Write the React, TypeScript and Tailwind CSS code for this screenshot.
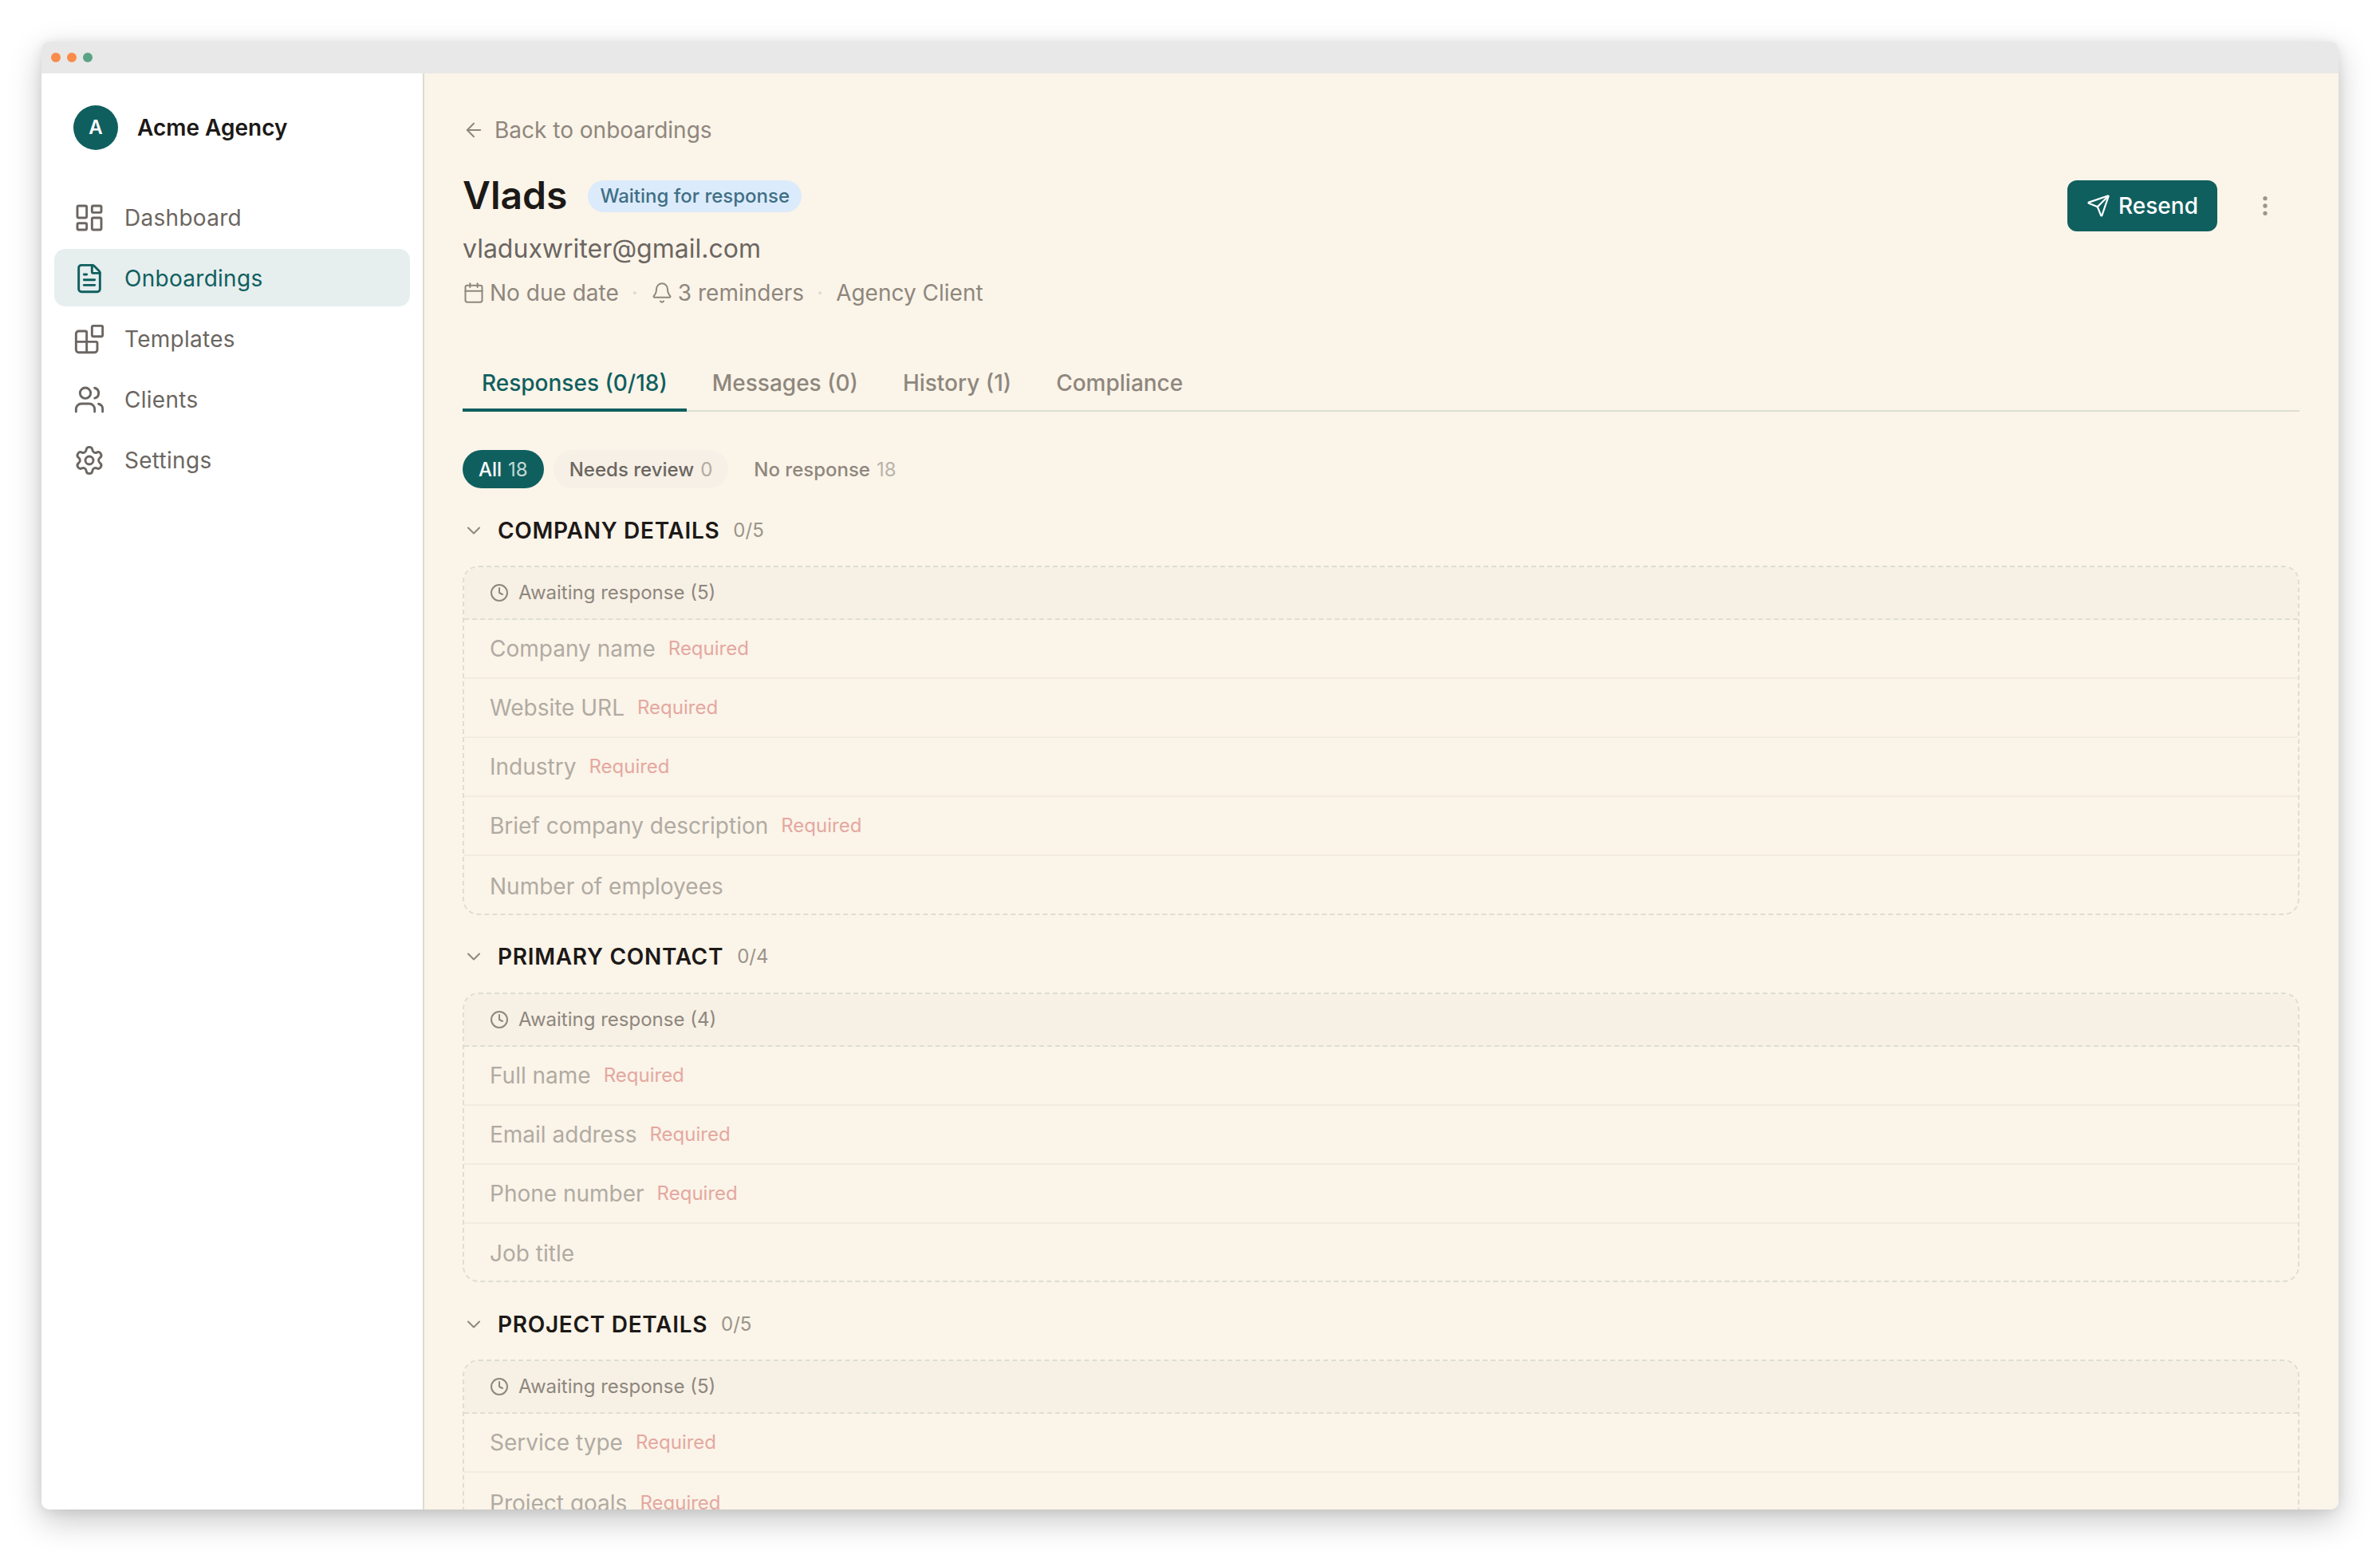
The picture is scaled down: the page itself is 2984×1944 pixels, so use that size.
import React from 'react';
import {
  ArrowLeft,
  Bell,
  Blocks,
  Calendar,
  ChevronDown,
  Clock,
  EllipsisVertical,
  FileText,
  LayoutDashboard,
  Send,
  Settings,
  Users,
} from 'lucide-react';

const navItems = [
  { label: 'Dashboard', icon: LayoutDashboard },
  { label: 'Onboardings', icon: FileText, active: true },
  { label: 'Templates', icon: Blocks },
  { label: 'Clients', icon: Users },
  { label: 'Settings', icon: Settings },
];

const tabs = [
  { label: 'Responses (0/18)', active: true },
  { label: 'Messages (0)' },
  { label: 'History (1)' },
  { label: 'Compliance' },
];

const sections = [
  {
    title: 'COMPANY DETAILS',
    count: '0/5',
    waiting: 5,
    rows: [
      { label: 'Company name', required: true },
      { label: 'Website URL', required: true },
      { label: 'Industry', required: true },
      { label: 'Brief company description', required: true },
      { label: 'Number of employees' },
    ],
  },
  {
    title: 'PRIMARY CONTACT',
    count: '0/4',
    waiting: 4,
    rows: [
      { label: 'Full name', required: true },
      { label: 'Email address', required: true },
      { label: 'Phone number', required: true },
      { label: 'Job title' },
    ],
  },
  {
    title: 'PROJECT DETAILS',
    count: '0/5',
    waiting: 5,
    rows: [
      { label: 'Service type', required: true },
      { label: 'Project goals', required: true },
    ],
  },
];

function Sidebar() {
  return (
    <aside className="w-[480px] shrink-0 border-r-2 border-[#dcdccf] bg-white px-4">
      <div className="mt-[40px] flex h-[56px] items-center pl-[24px]">
        <div className="flex h-[56px] w-[56px] items-center justify-center rounded-full bg-[#105f5f] text-[24px] font-semibold text-white">
          A
        </div>
        <span className="ml-[24px] text-[28px] font-semibold text-[#1c1917]">Acme Agency</span>
      </div>
      <nav className="mt-[48px] flex flex-col gap-1">
        {navItems.map((item) => (
          <div
            key={item.label}
            className={
              item.active
                ? 'flex h-[72px] items-center gap-[24px] rounded-[14px] bg-[#e6eeee] pl-[24px] pt-[2px] text-[#105f5f]'
                : 'flex h-[72px] items-center gap-[24px] rounded-[14px] pl-[24px] pt-[2px] text-[#6b6661]'
            }
          >
            <item.icon size={40} strokeWidth={1.75} />
            <span className="text-[28px] tracking-[0.01em]">{item.label}</span>
          </div>
        ))}
      </nav>
    </aside>
  );
}

function Section({ section }: { section: (typeof sections)[number] }) {
  return (
    <section className="mb-[32px]">
      <div className="flex h-[40px] items-center pt-[1px]">
        <ChevronDown size={28} strokeWidth={1.75} className="text-[#8e877d]" />
        <span className="ml-[16px] text-[28px] font-semibold tracking-[0.025em] text-[#1c1917]">{section.title}</span>
        <span className="ml-[17px] text-[24px] text-[#9a948a]">{section.count}</span>
      </div>
      <div className="mt-[25px] rounded-[20px] border-2 border-dashed border-[#dddfd0]">
        <div className="flex h-[66px] items-center gap-[12px] rounded-t-[20px] border-b-2 border-dashed border-[#dddfd0] bg-[#f7f0e5] pl-[32px] text-[24px] text-[#8e877d]">
          <Clock size={24} strokeWidth={2} />
          <span>Awaiting response ({section.waiting})</span>
        </div>
        {section.rows.map((row, index) => (
          <div
            key={row.label}
            className={
              index === section.rows.length - 1
                ? 'flex h-[71.5px] items-center pl-[32px] pt-[4px]'
                : 'flex h-[74px] items-center border-b-2 border-[#f2ecdf] pl-[32px]'
            }
          >
            <span className="text-[28px] text-[#b0aba2]">{row.label}</span>
            {row.required && <span className="ml-[16px] text-[24px] text-[#e4a8a0]">Required</span>}
          </div>
        ))}
      </div>
    </section>
  );
}

export default function App() {
  return (
    <div className="h-[1944px] w-[2984px] overflow-hidden bg-white p-[52px] [font-family:Inter,sans-serif]">
      <div className="flex h-[1840px] w-[2880px] flex-col overflow-hidden rounded-[10px] shadow-[0_14px_40px_rgba(0,0,0,0.22),0_2px_14px_rgba(0,0,0,0.08)]">
        <div className="flex h-[40px] shrink-0 items-center gap-2 bg-[#e8e8e8] pl-[12px]">
          <span className="h-[12px] w-[12px] rounded-full bg-[#f98c4a]" />
          <span className="h-[12px] w-[12px] rounded-full bg-[#f98c4a]" />
          <span className="h-[12px] w-[12px] rounded-full bg-[#5ba386]" />
        </div>
        <div className="flex min-h-0 flex-1">
          <Sidebar />
          <main className="min-w-0 flex-1 overflow-hidden bg-[#fbf4e9] pl-[48px] pr-[49px] pt-[51px]">
            <div className="flex h-[40px] items-center gap-[12px] text-[28px] text-[#8e877d]">
              <ArrowLeft size={28} strokeWidth={1.75} />
              <span>Back to onboardings</span>
            </div>

            <div className="flex items-start justify-between">
              <div>
                <div className="mt-[30px] flex h-[64px] items-center">
                  <h1 className="text-[48px] font-semibold text-[#1c1917]">Vlads</h1>
                  <span className="ml-[26px] mt-[2px] flex h-[40px] items-center rounded-full bg-[#dcebfb] px-[15px] text-[24px] font-medium text-[#3f6f85]">
                    Waiting for response
                  </span>
                </div>
                <div className="mt-[13px] flex h-[44px] items-center text-[32px] text-[#6b6661]">
                  vladuxwriter@gmail.com
                </div>
                <div className="mt-[13px] flex h-[40px] items-center text-[28px] text-[#8e877d]">
                  <Calendar size={28} strokeWidth={1.75} />
                  <span className="ml-[6px]">No due date</span>
                  <span className="mx-[16px] text-[#dcdccf]">·</span>
                  <Bell size={28} strokeWidth={1.75} />
                  <span className="ml-[6px]">3 reminders</span>
                  <span className="mx-[16px] text-[#dcdccf]">·</span>
                  <span>Agency Client</span>
                </div>
              </div>
              <div className="mt-[43px] flex items-center">
                <button className="flex h-[64px] w-[188px] items-center justify-center gap-[10px] rounded-[12px] bg-[#105f5f] text-[28px] font-medium text-white">
                  <Send size={30} strokeWidth={1.75} />
                  Resend
                </button>
                <div className="ml-[30px] mr-[13px] flex w-[60px] justify-center text-[#9a948a]">
                  <EllipsisVertical size={32} strokeWidth={2} />
                </div>
              </div>
            </div>

            <div className="mt-[59px] flex gap-2 border-b-2 border-[#dcdfd0]">
              {tabs.map((tab) => (
                <div
                  key={tab.label}
                  className={
                    tab.active
                      ? '-mb-[2px] flex h-[70px] items-center border-b-4 border-[#105f5f] px-[24px] pt-[2px] text-[28px] font-medium text-[#105f5f]'
                      : 'flex h-[68px] items-center px-[24px] text-[28px] font-medium text-[#8e877d]'
                  }
                >
                  {tab.label}
                </div>
              ))}
            </div>

            <div className="mt-[48px] flex gap-[12px] text-[24px] font-medium">
              <div className="flex h-[48px] items-center gap-[8px] rounded-full bg-[#105f5f] px-[20px] pt-[2px] text-white">
                All <span className="font-normal text-[#c3d9d6]">18</span>
              </div>
              <div className="flex h-[48px] items-center gap-[8px] rounded-full bg-[#f6f0e6] px-[20px] pt-[2px] text-[#6b6661]">
                Needs review <span className="font-normal text-[#b0aba2]">0</span>
              </div>
              <div className="flex h-[48px] items-center gap-[8px] rounded-full px-[20px] pt-[2px] text-[#8e877d]">
                No response <span className="font-normal text-[#b9b4ab]">18</span>
              </div>
            </div>

            <div className="mt-[32px]">
              {sections.map((section) => (
                <Section key={section.title} section={section} />
              ))}
            </div>
          </main>
        </div>
      </div>
    </div>
  );
}
